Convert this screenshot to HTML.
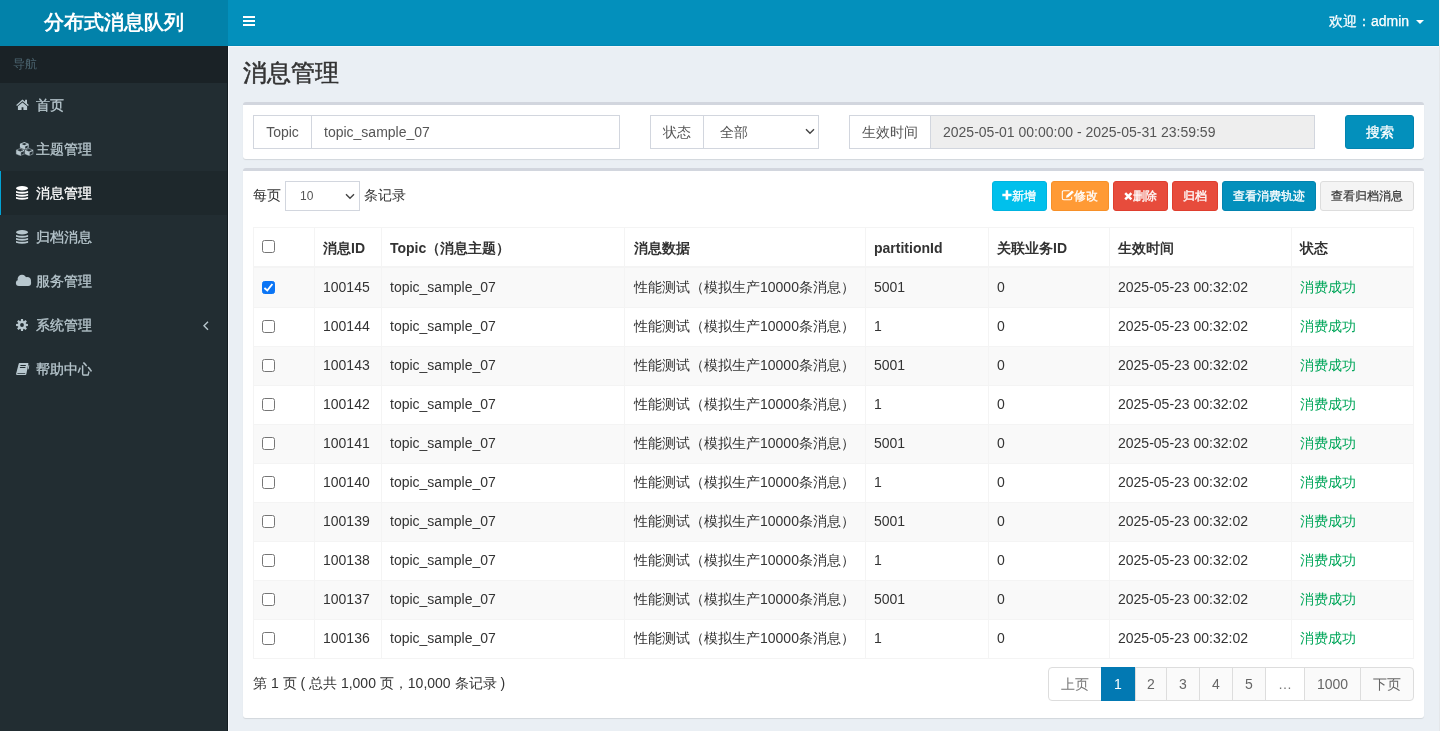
<!DOCTYPE html><html><head><meta charset="utf-8"><style>
*{box-sizing:border-box;margin:0;padding:0}
html,body{width:1440px;height:731px;overflow:hidden}
body{font-family:"Liberation Sans",sans-serif;font-size:14px;color:#333;background:#eaeff4;position:relative;will-change:transform}
.abs{position:absolute}
.hdr-logo{position:absolute;left:0;top:0;width:228px;height:46px;background:#0282aa;color:#fff;font-size:20px;font-weight:bold;text-align:center;line-height:44px}
.hdr-nav{position:absolute;left:228px;top:0;width:1211px;height:46px;background:#0390bc}
.edge{position:absolute;left:1439px;top:0;width:1px;height:731px;background:#f4f4f6}
.burger{position:absolute;left:243px;width:12px;height:2px;background:#fff}
.user{position:absolute;left:1329px;top:11px;line-height:20px;color:#fff;font-size:14px;white-space:nowrap;-webkit-text-stroke:0.25px #fff}
.caret{position:absolute;left:1416px;top:20px;width:0;height:0;border-left:4px solid transparent;border-right:4px solid transparent;border-top:4px solid #fff}
.sidebar{position:absolute;left:0;top:46px;width:228px;height:685px;background:#222d32}
.sb-head{height:37px;background:#1a2226;color:#4b646f;font-size:12px;padding-left:13px;line-height:37px}
.sb-item{height:44px;line-height:44px;color:#b8c7ce;position:relative;font-size:14px}
.sb-item .t{position:absolute;left:36px;top:0;-webkit-text-stroke:0.3px currentColor}
.sb-item .ic{position:absolute;left:16px;line-height:0}
.sb-item .ic svg{display:block}
.sb-item.active{background:#1e282c;color:#fff}
.sb-item.active:before{content:"";position:absolute;left:0;top:0;width:1px;height:44px;background:#02a2d4}
.title{position:absolute;left:243px;top:58px;font-size:24px;color:#333;line-height:30px;white-space:nowrap;-webkit-text-stroke:0.5px #333}
.box{position:absolute;background:#fff;border-top:3px solid #d2d6de;border-radius:3px;box-shadow:0 1px 1px rgba(0,0,0,0.1)}
.fc{position:absolute;border:1px solid #d2d6de;height:34px;line-height:32px;color:#555;font-size:14px;white-space:nowrap;background:#fff}
.addon{text-align:center}
.inp{padding-left:12px}
.chev{position:absolute;width:7px;height:7px;border-right:2px solid #444;border-bottom:2px solid #444;transform:rotate(45deg)}
.btn{position:absolute;height:30px;line-height:28px;border:1px solid transparent;border-radius:3px;color:#fff;font-size:12px;text-align:center;white-space:nowrap}
.tbl-line{position:absolute;background:#f4f4f4}
.cell{position:absolute;line-height:20px;white-space:nowrap;color:#333}
.th{font-weight:bold}
.cb{position:absolute;left:262px;width:13px;height:13px;border:1px solid #767676;border-radius:2.5px;background:#fff}
.cb.on{background:#0b75f5;border-color:#0b75f5}
.pg{position:absolute;top:667px;height:34px;line-height:32px;border:1px solid #ddd;background:#fafafa;color:#666;text-align:center;font-size:14px}
</style></head><body>
<div class="hdr-logo">分布式消息队列</div><div class="hdr-nav"></div>
<div class="burger" style="top:16px"></div>
<div class="burger" style="top:20px"></div>
<div class="burger" style="top:24px"></div>
<div class="user">欢迎：admin</div><div class="caret"></div>
<div class="sidebar"><div class="sb-head">导航</div>
<div class="sb-item"><span class="ic" style="top:16px;left:16px"><svg width="13" height="12" viewBox="0 0 13 12"><path fill="currentColor" d="M0.2 6.0L6.5 0.6L12.8 6.0L12.0 6.9L6.5 2.2L1.0 6.9Z M9.1 0.8H11V4.6L9.1 3.0Z M1.9 7.3L6.5 3.4L11.1 7.3V11H7.4V8.3H5.6V11H1.9Z"/></svg></span><span class="t">首页</span></div>
<div class="sb-item"><span class="ic" style="top:14px;left:15px"><svg width="19" height="16" viewBox="0 0 19 16"><path fill="currentColor" fill-rule="evenodd" d="M9.30 1.00 L13.70 2.80 L13.70 7.20 L9.30 9.00 L4.90 7.20 L4.90 2.80 Z M9.30 2.00 L11.90 3.10 L9.30 4.20 L6.70 3.10 Z M10.20 5.60 L12.70 4.60 L12.70 6.60 L10.20 7.70 Z"/><path fill="currentColor" fill-rule="evenodd" stroke="#222d32" stroke-width="0.5" d="M5.30 7.00 L9.70 8.80 L9.70 13.20 L5.30 15.00 L0.90 13.20 L0.90 8.80 Z M5.30 8.00 L7.90 9.10 L5.30 10.20 L2.70 9.10 Z M6.20 11.60 L8.70 10.60 L8.70 12.60 L6.20 13.70 Z"/><path fill="currentColor" fill-rule="evenodd" stroke="#222d32" stroke-width="0.5" d="M14.00 7.00 L18.40 8.80 L18.40 13.20 L14.00 15.00 L9.60 13.20 L9.60 8.80 Z M14.00 8.00 L16.60 9.10 L14.00 10.20 L11.40 9.10 Z M14.90 11.60 L17.40 10.60 L17.40 12.60 L14.90 13.70 Z"/></svg></span><span class="t">主题管理</span></div>
<div class="sb-item active"><span class="ic" style="top:15px;left:16px"><svg width="13" height="15" viewBox="0 0 13 15"><g fill="currentColor"><ellipse cx="6.05" cy="2.2" rx="6.05" ry="2.2"/><path d="M0 4.90 Q6.05 6.70 12.1 4.90 V6.80 Q6.05 8.60 0 6.80 Z"/><path d="M0 7.90 Q6.05 9.70 12.1 7.90 V9.80 Q6.05 11.60 0 9.80 Z"/><path d="M0 10.90 Q6.05 12.70 12.1 10.90 V12.80 Q6.05 14.60 0 12.80 Z"/></g></svg></span><span class="t">消息管理</span></div>
<div class="sb-item"><span class="ic" style="top:15px;left:16px"><svg width="13" height="15" viewBox="0 0 13 15"><g fill="currentColor"><ellipse cx="6.05" cy="2.2" rx="6.05" ry="2.2"/><path d="M0 4.90 Q6.05 6.70 12.1 4.90 V6.80 Q6.05 8.60 0 6.80 Z"/><path d="M0 7.90 Q6.05 9.70 12.1 7.90 V9.80 Q6.05 11.60 0 9.80 Z"/><path d="M0 10.90 Q6.05 12.70 12.1 10.90 V12.80 Q6.05 14.60 0 12.80 Z"/></g></svg></span><span class="t">归档消息</span></div>
<div class="sb-item"><span class="ic" style="top:15px;left:15px"><svg width="17" height="13" viewBox="0 0 17 13"><g fill="currentColor"><circle cx="3.9" cy="9.0" r="3.0"/><circle cx="7.0" cy="5.1" r="4.4"/><circle cx="12.1" cy="6.9" r="3.9"/><rect x="3.9" y="7" width="9.2" height="5"/><circle cx="13.1" cy="9.0" r="3.0"/></g></svg></span><span class="t">服务管理</span></div>
<div class="sb-item"><span class="ic" style="top:16px;left:16px"><svg width="12" height="12" viewBox="0 0 12 12"><path fill="currentColor" fill-rule="evenodd" d="M4.72 2.00 L5.00 0.08 L7.00 0.08 L7.28 2.00 L7.92 2.27 L9.48 1.11 L10.89 2.52 L9.73 4.08 L10.00 4.72 L11.92 5.00 L11.92 7.00 L10.00 7.28 L9.73 7.92 L10.89 9.48 L9.48 10.89 L7.92 9.73 L7.28 10.00 L7.00 11.92 L5.00 11.92 L4.72 10.00 L4.08 9.73 L2.52 10.89 L1.11 9.48 L2.27 7.92 L2.00 7.28 L0.08 7.00 L0.08 5.00 L2.00 4.72 L2.27 4.08 L1.11 2.52 L2.52 1.11 L4.08 2.27Z M7.90 6.00 A1.9 1.9 0 1 0 4.10 6.00 A1.9 1.9 0 1 0 7.90 6.00 Z"/></svg></span><span class="t">系统管理</span><svg class="abs" style="left:203px;top:18px" width="6" height="10" viewBox="0 0 6 10"><path d="M5 0.8L1 4.8L5 8.8" fill="none" stroke="#b8c7ce" stroke-width="1.4"/></svg></div>
<div class="sb-item"><span class="ic" style="top:15px;left:15px"><svg width="15" height="14" viewBox="0 0 15 14"><path fill="currentColor" fill-rule="evenodd" d="M4.5 1H12.9C13.3 1 13.5 1.3 13.4 1.7L11.3 12.2C11.2 12.7 10.8 13 10.3 13H2C1.3 13 0.9 12.5 1.1 11.8L3.7 1.7C3.8 1.3 4.1 1 4.5 1Z M5.5 3.1H10.9L10.7 4.0H5.3Z M5.0 5.1H10.5L10.3 6.0H4.8Z M2.5 10.9H10.3L10.1 11.8H2.3Z"/><path fill="currentColor" d="M13.4 3.2H14.3L13.6 7.2H12.7Z"/></svg></span><span class="t">帮助中心</span></div>
</div>
<div class="title">消息管理</div>
<div class="box" style="left:243px;top:102px;width:1181px;height:57px"></div>
<div class="fc addon" style="left:253px;top:115px;width:59px">Topic</div>
<div class="fc inp" style="left:311px;top:115px;width:309px">topic_sample_07</div>
<div class="fc addon" style="left:650px;top:115px;width:54px">状态</div>
<div class="fc inp" style="left:703px;top:115px;width:116px;padding-left:16px">全部</div>
<svg class="abs" style="left:805px;top:128px" width="10" height="7" viewBox="0 0 10 7"><path d="M1 1.2L5 5.2L9 1.2" fill="none" stroke="#444" stroke-width="1.4"/></svg>
<div class="fc addon" style="left:849px;top:115px;width:82px">生效时间</div>
<div class="fc inp" style="left:930px;top:115px;width:385px;background:#eee">2025-05-01 00:00:00 - 2025-05-31 23:59:59</div>
<div class="btn" style="left:1345px;top:115px;width:69px;height:34px;line-height:32px;font-size:14px;background:#0390bc;border-color:#0284b0;-webkit-text-stroke:0.3px #fff">搜索</div>
<div class="box" style="left:243px;top:168px;width:1181px;height:550px"></div>
<div class="cell" style="left:253px;top:185px">每页</div>
<div class="fc" style="left:285px;top:181px;width:75px;height:30px;line-height:28px;font-size:12px;padding-left:14px">10</div>
<svg class="abs" style="left:345px;top:193px" width="10" height="7" viewBox="0 0 10 7"><path d="M1 1.2L5 5.2L9 1.2" fill="none" stroke="#444" stroke-width="1.4"/></svg>
<div class="cell" style="left:364px;top:185px">条记录</div>
<div class="btn" style="left:992px;top:181px;width:55px;background:#00c0ec;border-color:#00b4e0"></div>
<div class="btn" style="left:1051px;top:181px;width:58px;background:#ff9a35;border-color:#f79028"></div>
<div class="btn" style="left:1113px;top:181px;width:55px;background:#e74c3c;border-color:#df3e2e"></div>
<div class="btn" style="left:1172px;top:181px;width:46px;background:#e74c3c;border-color:#df3e2e"></div>
<div class="btn" style="left:1222px;top:181px;width:94px;background:#0390bc;border-color:#0284b0"></div>
<div class="btn" style="left:1320px;top:181px;width:94px;background:#f4f4f4;border-color:#ddd"></div>
<svg class="abs" style="left:1002px;top:190px" width="10" height="10" viewBox="0 0 10 10"><path d="M3.6 0.3H6.2V3.7H9.6V6.3H6.2V9.7H3.6V6.3H0.3V3.7H3.6Z" fill="#fff"/></svg>
<div class="cell" style="left:1012px;top:186px;font-size:12px;color:#fff;-webkit-text-stroke:0.3px #fff">新增</div>
<svg class="abs" style="left:1061px;top:189px" width="14" height="12" viewBox="0 0 14 12"><path d="M8.6 1.7H2.7C1.8 1.7 1.3 2.2 1.3 3.1V9.3C1.3 10.2 1.8 10.7 2.7 10.7H9.3C10.2 10.7 10.7 10.2 10.7 9.3V7.8" fill="none" stroke="#fff" stroke-width="1.05"/><path d="M5.0 8.7L5.5 6.6L11.0 1.4L12.9 3.2L7.3 8.3Z" fill="#fff"/></svg>
<div class="cell" style="left:1074px;top:186px;font-size:12px;color:#fff;-webkit-text-stroke:0.3px #fff">修改</div>
<svg class="abs" style="left:1124px;top:192px" width="9" height="9" viewBox="0 0 9 9"><path d="M1.2 1.2L7.4 7.4M7.4 1.2L1.2 7.4" stroke="#fff" stroke-width="2.5"/></svg>
<div class="cell" style="left:1133px;top:186px;font-size:12px;color:#fff;-webkit-text-stroke:0.3px #fff">删除</div>
<div class="cell" style="left:1183px;top:186px;font-size:12px;color:#fff;-webkit-text-stroke:0.3px #fff">归档</div>
<div class="cell" style="left:1233px;top:186px;font-size:12px;color:#fff;-webkit-text-stroke:0.3px #fff">查看消费轨迹</div>
<div class="cell" style="left:1331px;top:186px;font-size:12px;color:#333;-webkit-text-stroke:0.2px #333">查看归档消息</div>
<div class="abs" style="left:253px;top:268px;width:1161px;height:39px;background:#f9f9f9"></div>
<div class="abs" style="left:253px;top:347px;width:1161px;height:38px;background:#f9f9f9"></div>
<div class="abs" style="left:253px;top:425px;width:1161px;height:38px;background:#f9f9f9"></div>
<div class="abs" style="left:253px;top:503px;width:1161px;height:38px;background:#f9f9f9"></div>
<div class="abs" style="left:253px;top:581px;width:1161px;height:38px;background:#f9f9f9"></div>
<div class="tbl-line" style="left:253px;top:227px;width:1161px;height:1px"></div>
<div class="tbl-line" style="left:253px;top:266px;width:1161px;height:2px"></div>
<div class="tbl-line" style="left:253px;top:307px;width:1161px;height:1px"></div>
<div class="tbl-line" style="left:253px;top:346px;width:1161px;height:1px"></div>
<div class="tbl-line" style="left:253px;top:385px;width:1161px;height:1px"></div>
<div class="tbl-line" style="left:253px;top:424px;width:1161px;height:1px"></div>
<div class="tbl-line" style="left:253px;top:463px;width:1161px;height:1px"></div>
<div class="tbl-line" style="left:253px;top:502px;width:1161px;height:1px"></div>
<div class="tbl-line" style="left:253px;top:541px;width:1161px;height:1px"></div>
<div class="tbl-line" style="left:253px;top:580px;width:1161px;height:1px"></div>
<div class="tbl-line" style="left:253px;top:619px;width:1161px;height:1px"></div>
<div class="tbl-line" style="left:253px;top:658px;width:1161px;height:1px"></div>
<div class="tbl-line" style="left:253px;top:227px;width:1px;height:432px"></div>
<div class="tbl-line" style="left:314px;top:227px;width:1px;height:432px"></div>
<div class="tbl-line" style="left:381px;top:227px;width:1px;height:432px"></div>
<div class="tbl-line" style="left:624px;top:227px;width:1px;height:432px"></div>
<div class="tbl-line" style="left:865px;top:227px;width:1px;height:432px"></div>
<div class="tbl-line" style="left:988px;top:227px;width:1px;height:432px"></div>
<div class="tbl-line" style="left:1109px;top:227px;width:1px;height:432px"></div>
<div class="tbl-line" style="left:1291px;top:227px;width:1px;height:432px"></div>
<div class="tbl-line" style="left:1413px;top:227px;width:1px;height:432px"></div>
<div class="cell th" style="left:323px;top:238px">消息ID</div>
<div class="cell th" style="left:390px;top:238px">Topic（消息主题）</div>
<div class="cell th" style="left:634px;top:238px">消息数据</div>
<div class="cell th" style="left:874px;top:238px">partitionId</div>
<div class="cell th" style="left:997px;top:238px">关联业务ID</div>
<div class="cell th" style="left:1118px;top:238px">生效时间</div>
<div class="cell th" style="left:1300px;top:238px">状态</div>
<div class="cb" style="top:240px"></div>
<div class="cb on" style="top:281px"><svg width="11" height="11" viewBox="0 0 11 11" style="position:absolute;left:0;top:0"><path d="M1.4 6.0L4.3 8.5L9.4 2.0" fill="none" stroke="#fff" stroke-width="1.9"/></svg></div>
<div class="cell" style="left:323px;top:277px">100145</div>
<div class="cell" style="left:390px;top:277px">topic_sample_07</div>
<div class="cell" style="left:634px;top:277px">性能测试（模拟生产10000条消息）</div>
<div class="cell" style="left:874px;top:277px">5001</div>
<div class="cell" style="left:997px;top:277px">0</div>
<div class="cell" style="left:1118px;top:277px">2025-05-23 00:32:02</div>
<div class="cell" style="left:1300px;top:277px;color:#00a65a">消费成功</div>
<div class="cb" style="top:320px"></div>
<div class="cell" style="left:323px;top:316px">100144</div>
<div class="cell" style="left:390px;top:316px">topic_sample_07</div>
<div class="cell" style="left:634px;top:316px">性能测试（模拟生产10000条消息）</div>
<div class="cell" style="left:874px;top:316px">1</div>
<div class="cell" style="left:997px;top:316px">0</div>
<div class="cell" style="left:1118px;top:316px">2025-05-23 00:32:02</div>
<div class="cell" style="left:1300px;top:316px;color:#00a65a">消费成功</div>
<div class="cb" style="top:359px"></div>
<div class="cell" style="left:323px;top:355px">100143</div>
<div class="cell" style="left:390px;top:355px">topic_sample_07</div>
<div class="cell" style="left:634px;top:355px">性能测试（模拟生产10000条消息）</div>
<div class="cell" style="left:874px;top:355px">5001</div>
<div class="cell" style="left:997px;top:355px">0</div>
<div class="cell" style="left:1118px;top:355px">2025-05-23 00:32:02</div>
<div class="cell" style="left:1300px;top:355px;color:#00a65a">消费成功</div>
<div class="cb" style="top:398px"></div>
<div class="cell" style="left:323px;top:394px">100142</div>
<div class="cell" style="left:390px;top:394px">topic_sample_07</div>
<div class="cell" style="left:634px;top:394px">性能测试（模拟生产10000条消息）</div>
<div class="cell" style="left:874px;top:394px">1</div>
<div class="cell" style="left:997px;top:394px">0</div>
<div class="cell" style="left:1118px;top:394px">2025-05-23 00:32:02</div>
<div class="cell" style="left:1300px;top:394px;color:#00a65a">消费成功</div>
<div class="cb" style="top:437px"></div>
<div class="cell" style="left:323px;top:433px">100141</div>
<div class="cell" style="left:390px;top:433px">topic_sample_07</div>
<div class="cell" style="left:634px;top:433px">性能测试（模拟生产10000条消息）</div>
<div class="cell" style="left:874px;top:433px">5001</div>
<div class="cell" style="left:997px;top:433px">0</div>
<div class="cell" style="left:1118px;top:433px">2025-05-23 00:32:02</div>
<div class="cell" style="left:1300px;top:433px;color:#00a65a">消费成功</div>
<div class="cb" style="top:476px"></div>
<div class="cell" style="left:323px;top:472px">100140</div>
<div class="cell" style="left:390px;top:472px">topic_sample_07</div>
<div class="cell" style="left:634px;top:472px">性能测试（模拟生产10000条消息）</div>
<div class="cell" style="left:874px;top:472px">1</div>
<div class="cell" style="left:997px;top:472px">0</div>
<div class="cell" style="left:1118px;top:472px">2025-05-23 00:32:02</div>
<div class="cell" style="left:1300px;top:472px;color:#00a65a">消费成功</div>
<div class="cb" style="top:515px"></div>
<div class="cell" style="left:323px;top:511px">100139</div>
<div class="cell" style="left:390px;top:511px">topic_sample_07</div>
<div class="cell" style="left:634px;top:511px">性能测试（模拟生产10000条消息）</div>
<div class="cell" style="left:874px;top:511px">5001</div>
<div class="cell" style="left:997px;top:511px">0</div>
<div class="cell" style="left:1118px;top:511px">2025-05-23 00:32:02</div>
<div class="cell" style="left:1300px;top:511px;color:#00a65a">消费成功</div>
<div class="cb" style="top:554px"></div>
<div class="cell" style="left:323px;top:550px">100138</div>
<div class="cell" style="left:390px;top:550px">topic_sample_07</div>
<div class="cell" style="left:634px;top:550px">性能测试（模拟生产10000条消息）</div>
<div class="cell" style="left:874px;top:550px">1</div>
<div class="cell" style="left:997px;top:550px">0</div>
<div class="cell" style="left:1118px;top:550px">2025-05-23 00:32:02</div>
<div class="cell" style="left:1300px;top:550px;color:#00a65a">消费成功</div>
<div class="cb" style="top:593px"></div>
<div class="cell" style="left:323px;top:589px">100137</div>
<div class="cell" style="left:390px;top:589px">topic_sample_07</div>
<div class="cell" style="left:634px;top:589px">性能测试（模拟生产10000条消息）</div>
<div class="cell" style="left:874px;top:589px">5001</div>
<div class="cell" style="left:997px;top:589px">0</div>
<div class="cell" style="left:1118px;top:589px">2025-05-23 00:32:02</div>
<div class="cell" style="left:1300px;top:589px;color:#00a65a">消费成功</div>
<div class="cb" style="top:632px"></div>
<div class="cell" style="left:323px;top:628px">100136</div>
<div class="cell" style="left:390px;top:628px">topic_sample_07</div>
<div class="cell" style="left:634px;top:628px">性能测试（模拟生产10000条消息）</div>
<div class="cell" style="left:874px;top:628px">1</div>
<div class="cell" style="left:997px;top:628px">0</div>
<div class="cell" style="left:1118px;top:628px">2025-05-23 00:32:02</div>
<div class="cell" style="left:1300px;top:628px;color:#00a65a">消费成功</div>
<div class="cell" style="left:253px;top:673px">第 1 页 ( 总共 1,000 页，10,000 条记录 )</div>
<div class="pg" style="left:1048px;width:54px;background:#fff;color:#777;border-radius:4px 0 0 4px;">上页</div>
<div class="pg" style="left:1101px;width:34px;background:#0279b3;color:#fff;border-color:#0279b3;z-index:2;">1</div>
<div class="pg" style="left:1135px;width:32px;">2</div>
<div class="pg" style="left:1166px;width:34px;">3</div>
<div class="pg" style="left:1199px;width:34px;">4</div>
<div class="pg" style="left:1232px;width:34px;">5</div>
<div class="pg" style="left:1265px;width:40px;background:#fff;color:#777;">…</div>
<div class="pg" style="left:1304px;width:57px;">1000</div>
<div class="pg" style="left:1360px;width:54px;border-radius:0 4px 4px 0;">下页</div>
<div class="abs" style="left:1439px;top:0;width:1px;height:46px;background:#f8f3f1"></div><div class="abs" style="left:1439px;top:46px;width:1px;height:685px;background:#e4e7ea"></div>
<div class="abs" style="left:228px;top:45px;width:1211px;height:1px;background:#0289b6"></div><div class="abs" style="left:229px;top:46px;width:1210px;height:1px;background:#f6f7f9"></div>
<div class="abs" style="left:227px;top:46px;width:1px;height:685px;background:#131c21"></div><div class="abs" style="left:228px;top:46px;width:1px;height:685px;background:#f6f9fc"></div>
</body></html>
